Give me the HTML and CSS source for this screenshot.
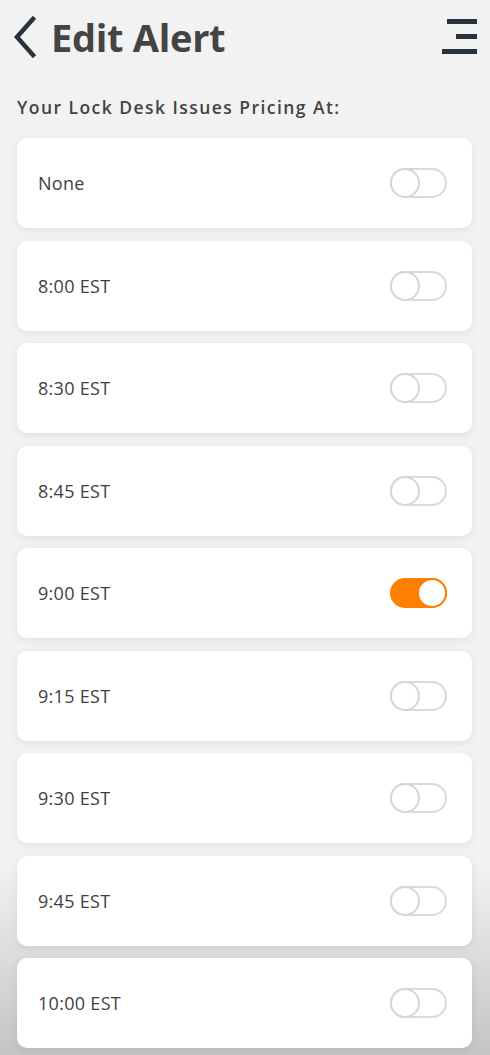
FILE: index.html
```html
<!DOCTYPE html>
<html>
<head>
<meta charset="utf-8">
<link rel="stylesheet" href="styles.css">
</head>
<body>
<div class="page">
  <header class="topbar">
    <div class="title-wrap">
      <svg class="back" width="26" height="42" viewBox="0 0 26 42"><path d="M21 3 L5 21 L21 39" fill="none" stroke="#27323c" stroke-width="4.5" stroke-linecap="square"/></svg>
      <h1 class="title">Edit Alert</h1>
    </div>
    <svg class="menu" width="36" height="38" viewBox="0 0 36 38"><rect x="5" y="0" width="30" height="5" fill="#27323c"/><rect x="14" y="15" width="21" height="5" fill="#27323c"/><rect x="0" y="30" width="35" height="5" fill="#27323c"/></svg>
  </header>
  <p class="subtitle">Your Lock Desk Issues Pricing At:</p>
  <div class="list">
    <div class="card"><span class="label">None</span><span class="toggle"></span></div>
    <div class="card"><span class="label">8:00 EST</span><span class="toggle"></span></div>
    <div class="card"><span class="label">8:30 EST</span><span class="toggle"></span></div>
    <div class="card"><span class="label">8:45 EST</span><span class="toggle"></span></div>
    <div class="card"><span class="label">9:00 EST</span><span class="toggle on"></span></div>
    <div class="card"><span class="label">9:15 EST</span><span class="toggle"></span></div>
    <div class="card"><span class="label">9:30 EST</span><span class="toggle"></span></div>
    <div class="card"><span class="label">9:45 EST</span><span class="toggle"></span></div>
    <div class="card"><span class="label">10:00 EST</span><span class="toggle"></span></div>
  </div>
</div>
</body>
</html>
```
FILE: styles.css
```css
html, body {
  margin: 0;
  padding: 0;
}
body {
  min-height: 1055px;
  background: linear-gradient(to bottom, #f2f2f2 0, #f2f2f2 82%, #c4c4c4 100%);
  font-family: "Open Sans", "Noto Sans", sans-serif;
  color: #444;
}
.page {
  padding: 0 18px 0 17px;
}
.topbar {
  display: flex;
  justify-content: space-between;
  align-items: flex-start;
  padding-top: 16px;
  height: 66px;
  box-sizing: border-box;
}
.title-wrap {
  display: flex;
  align-items: center;
  margin-left: -5px;
}
.back {
  display: block;
}
.title {
  margin: 0 0 0 13px;
  font-size: 38px;
  line-height: 42px;
  font-weight: 700;
  color: #444;
  letter-spacing: -0.3px;
}
.menu {
  display: block;
  margin-top: 3px;
  margin-right: -6px;
}
.subtitle {
  margin: 30px 0 20px 0;
  font-size: 17.5px;
  line-height: 22px;
  font-weight: 600;
  color: #444;
  letter-spacing: 1.45px;
}
.list {
  display: flex;
  flex-direction: column;
  gap: 12.5px;
}
.card {
  height: 90px;
  background: #fff;
  border-radius: 10px;
  box-shadow: 0 2px 8px rgba(0,0,0,0.08);
  display: flex;
  align-items: center;
  justify-content: space-between;
  padding: 0 25px 0 21px;
  box-sizing: border-box;
}
.label {
  font-size: 18px;
  font-weight: 500;
  color: #3f3f3f;
  letter-spacing: 0.3px;
}
.toggle {
  position: relative;
  width: 57px;
  height: 30px;
  box-sizing: border-box;
  border: 2px solid #d9d9d9;
  border-radius: 15px;
  background: #fff;
}
.toggle::after {
  content: "";
  position: absolute;
  left: -2px;
  top: -2px;
  width: 30px;
  height: 30px;
  box-sizing: border-box;
  border: 2px solid #d6d6d6;
  border-radius: 50%;
  background: #fff;
}
.toggle.on {
  background: #ff7f00;
  border-color: #ff7f00;
}
.toggle.on::after {
  left: auto;
  right: -2px;
  border-color: #ff7f00;
}
```
